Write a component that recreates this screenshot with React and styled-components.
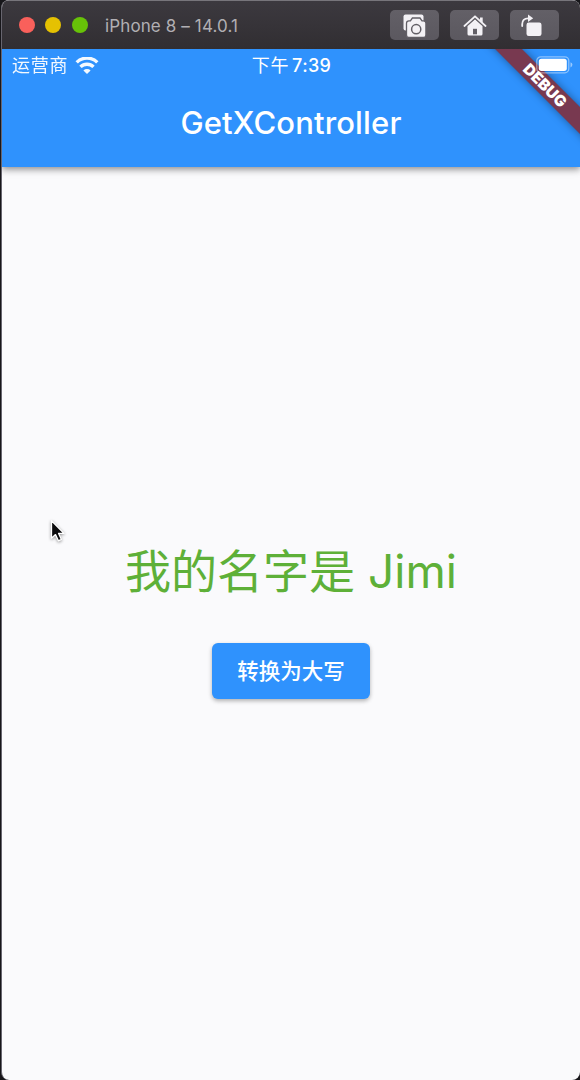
import React from "react";
import styled, { createGlobalStyle } from "styled-components";

const GlobalStyle = createGlobalStyle`
  *, *::before, *::after { box-sizing: border-box; }
  html, body { margin: 0; height: 100%; background: #17161a; }
  body { font-family: Inter, "Noto Sans CJK SC", sans-serif; overflow: hidden; }
  #root { height: 100%; }
`;

const Desktop = styled.div`
  height: 1080px;
  width: 580px;
  padding-left: 1px;
  background: #17161a;
  overflow: hidden;
`;

const Window = styled.div`
  position: relative;
  display: flex;
  flex-direction: column;
  height: 1080px;
  border-radius: 8px;
  border-left: 1px solid #67656f;
  overflow: hidden;
  background: #fafafc;
`;

const TitleBar = styled.header`
  display: flex;
  align-items: center;
  flex: none;
  height: 49px;
  padding: 0 21px 0 16.5px;
  border-top: 1px solid #77757b;
  background: linear-gradient(#3c393f, #312e32);
`;

const Lights = styled.div`
  display: flex;
  gap: 10.5px;
`;

const Light = styled.span`
  width: 16px;
  height: 16px;
  border-radius: 50%;
  background: ${(p) => p.$color};
`;

const WindowTitle = styled.div`
  flex: 1;
  margin: 2px 0 0 17.5px;
  color: #b1afb3;
  font-size: 17px;
  line-height: 24px;
  letter-spacing: 0.12px;
  white-space: nowrap;
`;

const Tools = styled.div`
  display: flex;
  gap: 11px;
`;

const ToolButton = styled.button`
  display: flex;
  align-items: center;
  justify-content: center;
  width: 49px;
  height: 30px;
  padding: ${(p) => p.$inset || "0"};
  border: 0;
  border-radius: 5px;
  background: linear-gradient(#636067, #5b585f);
`;

const Screen = styled.main`
  position: relative;
  display: flex;
  flex-direction: column;
  flex: 1;
  overflow: hidden;
`;

const AppBar = styled.div`
  flex: none;
  height: 117.5px;
  background: #2f92fd;
  box-shadow: 0 2px 6px rgba(0, 0, 0, 0.34), 0 4px 8px rgba(0, 0, 0, 0.12);
`;

const StatusBar = styled.div`
  display: grid;
  grid-template-columns: 1fr auto 1fr;
  align-items: center;
  height: 33px;
  padding: 0 9px 0 10px;
  color: #fff;
  font-size: 18px;
  line-height: 33px;
`;

const Carrier = styled.div`
  display: flex;
  align-items: center;
  gap: 7px;
  opacity: 0.95;
  letter-spacing: 0.8px;
`;

const Clock = styled.div`
  display: flex;
  gap: 3px;
  font-weight: 500;
`;

const Meridiem = styled.span`
  font-weight: 400;
  letter-spacing: 0.7px;
`;

const Time = styled.span`
  letter-spacing: 0.35px;
`;

const AppTitle = styled.h1`
  margin: 0;
  height: 82px;
  color: #fff;
  font-size: 31px;
  font-weight: 500;
  line-height: 82px;
  letter-spacing: 0.15px;
  text-align: center;
`;

const Body = styled.section`
  display: flex;
  flex-direction: column;
  align-items: center;
  flex: 1;
  padding-top: 369.5px;
`;

const NameText = styled.p`
  margin: 0;
  color: #5eb038;
  font-size: 46px;
  line-height: 70px;
  white-space: pre;
`;

const ActionButton = styled.button`
  width: 158px;
  height: 56px;
  margin-top: 37px;
  padding: 0;
  border: 0;
  border-radius: 6px;
  color: #fff;
  background: #2f92fd;
  font: 500 21.5px/56px Inter, "Noto Sans CJK SC", sans-serif;
  box-shadow: 0 2px 4px rgba(0, 0, 0, 0.3);
`;

const Ribbon = styled.div`
  position: absolute;
  top: 27px;
  left: 442.5px;
  width: 200px;
  height: 19px;
  transform: rotate(45deg);
  background: #783950;
  color: #fff;
  font-size: 15.5px;
  font-weight: 900;
  line-height: 19px;
  text-align: center;
  box-shadow: 0 0 9px rgba(0, 0, 0, 0.4);
`;

const Battery = styled.div`
  position: absolute;
  top: 6.5px;
  right: 7.5px;
  display: flex;
`;

const Pointer = styled.svg`
  position: absolute;
  left: 45px;
  top: 518px;
  filter: drop-shadow(0 1px 1.5px rgba(0, 0, 0, 0.4));
`;

const CameraIcon = () => (
  <svg width="25" height="25" viewBox="0 0 25 25">
    <rect x="1.5" y="1.5" width="20" height="16" rx="2" fill="#f3f1f5" />
    <path
      d="M4.500 10.300q0-2.500 2.500-2.500h1.400l2-2.800h7.600l2 2.800h1.400q2.500 0 2.500 2.500v11.700q0 2.500-2.500 2.500H7q-2.500 0-2.500-2.500z"
      fill="#f3f1f5"
      stroke="#625f66"
      strokeWidth="1.3"
    />
    <circle cx="14.200" cy="16.200" r="4.600" fill="#f3f1f5" stroke="#625f66" strokeWidth="1.500" />
  </svg>
);

const HomeIcon = () => (
  <svg width="24" height="23" viewBox="0 0 24 23">
    <path d="M4.500 12 12 5.200l7.500 6.800V20q0 1.500-1.500 1.500H6Q4.500 21.500 4.500 20z" fill="#f3f1f5" />
    <path d="M17 3.500h2.700v6l-2.700-2.500z" fill="#f3f1f5" />
    <path d="M4.300 11.700 12 4.700l7.700 7" fill="none" stroke="#625f66" strokeWidth="0.8" />
    <path d="M1.400 12 12 2.300 22.600 12" fill="none" stroke="#f3f1f5" strokeWidth="1.800" strokeLinecap="round" strokeLinejoin="round" />
    <path d="M10 14.800h4v5.500h-4z" fill="#625f66" />
  </svg>
);

const RotateIcon = () => (
  <svg width="24" height="24" viewBox="0 0 24 24">
    <rect x="7.500" y="9.500" width="15" height="13.500" rx="2.200" fill="#f3f1f5" />
    <path d="M3.200 13v-1.700q0-6 6-6h1" fill="none" stroke="#f3f1f5" strokeWidth="1.800" strokeLinecap="round" />
    <path d="M9 1.500 14.200 5.300 9 9z" fill="#f3f1f5" />
  </svg>
);

const WifiIcon = () => (
  <svg width="24" height="18" viewBox="0 0 24 18" fill="none" stroke="#fff" strokeWidth="3.400">
    <path d="M1.700 5.400a14.600 14.600 0 0 1 20.600 0" />
    <path d="M5.500 9.900a9.200 9.200 0 0 1 13 0" />
    <path d="M12 17 8.400 13.400a5.100 5.100 0 0 1 7.200 0z" fill="#fff" stroke="none" />
  </svg>
);

const BatteryIcon = () => (
  <svg width="37" height="18" viewBox="0 0 37 18">
    <rect x="0.800" y="0.800" width="32" height="16" rx="4" fill="none" stroke="#fff" strokeOpacity="0.45" strokeWidth="1.300" />
    <rect x="2.800" y="2.700" width="28" height="12.300" rx="2.700" fill="#fff" />
    <path d="M34.500 6.200q1.900.9 1.900 2.600t-1.900 2.600z" fill="#fff" fillOpacity="0.5" />
  </svg>
);

export default function App() {
  return (
    <>
      <GlobalStyle />
      <Desktop>
        <Window>
          <TitleBar>
            <Lights>
              <Light $color="#f9605b" />
              <Light $color="#e5c102" />
              <Light $color="#67c208" />
            </Lights>
            <WindowTitle>iPhone 8 – 14.0.1</WindowTitle>
            <Tools>
              <ToolButton aria-label="Screenshot"><CameraIcon /></ToolButton>
              <ToolButton aria-label="Home"><HomeIcon /></ToolButton>
              <ToolButton aria-label="Rotate" $inset="0 7px 0 0"><RotateIcon /></ToolButton>
            </Tools>
          </TitleBar>
          <Screen>
            <AppBar>
              <StatusBar>
                <Carrier>
                  <span>运营商</span>
                  <WifiIcon />
                </Carrier>
                <Clock>
                  <Meridiem>下午</Meridiem>
                  <Time>7:39</Time>
                </Clock>
              </StatusBar>
              <AppTitle>GetXController</AppTitle>
            </AppBar>
            <Body>
              <NameText>我的名字是 Jimi</NameText>
              <ActionButton>转换为大写</ActionButton>
            </Body>
            <Ribbon>DEBUG</Ribbon>
            <Battery>
              <BatteryIcon />
            </Battery>
          </Screen>
          <Pointer width="20" height="26" viewBox="0 0 20 26">
            <path
              d="M4.500 2.800v17.400l4-3.600 2.900 6.200 3-1.400-2.800-6h5.300z"
              fill="#0b0b0d"
              stroke="#fff"
              strokeWidth="1.3"
              strokeLinejoin="round"
            />
          </Pointer>
        </Window>
      </Desktop>
    </>
  );
}
